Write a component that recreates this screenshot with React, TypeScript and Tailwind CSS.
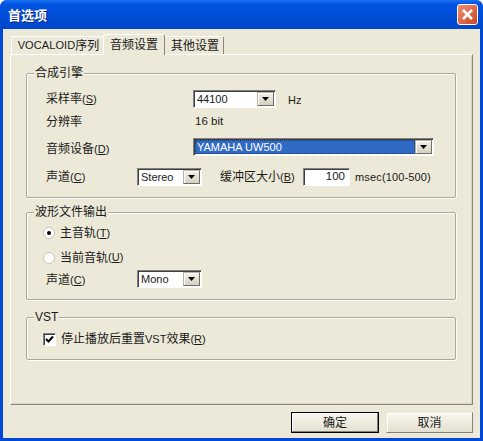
const font = "[font-family:'Liberation_Sans','Noto_Sans_CJK_SC',sans-serif]";

function U({ c }: { c: string }) {
  return <span className="text-[11px]">(<span className="underline">{c}</span>)</span>;
}

function Arrow() {
  return (
    <span className="flex h-full w-[17px] shrink-0 items-center justify-center border border-[#b8b4a4] border-r-[#716f64] border-b-[#716f64] bg-gradient-to-b from-[#f4f2e8] to-[#d4d0c0] shadow-[inset_1px_1px_0_#fff]">
      <svg width="7" height="4" viewBox="0 0 7 4"><path d="M0 0h7L3.5 4z" fill="#000" /></svg>
    </span>
  );
}

function Combo({ value, className, selected }: { value: string; className: string; selected?: boolean }) {
  return (
    <div className={`flex h-[18px] items-center border border-[#808080] border-r-white border-b-white bg-white p-px text-[11px] shadow-[inset_1px_1px_0_#404040] ${className}`}>
      <span className={`flex h-full min-w-0 flex-1 items-center pl-[2px] ${selected ? "bg-[#316ac5] text-white outline-1 -outline-offset-1 outline-dotted outline-[#1a3a70]" : ""}`}>{value}</span>
      <Arrow />
    </div>
  );
}

function Group({ title, className, children }: { title: string; className: string; children: React.ReactNode }) {
  return (
    <div className={`relative w-[430px] rounded-[2px] border border-[#aca899] shadow-[1px_1px_0_#fff,inset_1px_1px_0_#fff] ${className}`}>
      <span className="absolute -top-[9px] left-[7px] bg-[#ece9d8] px-[1px] leading-[16px]">{title}</span>
      {children}
    </div>
  );
}

function Row({ className, children }: { className?: string; children: React.ReactNode }) {
  return <div className={`flex h-[18px] items-center ${className ?? ""}`}>{children}</div>;
}

function Tab({ children, active, className }: { children: React.ReactNode; active?: boolean; className: string }) {
  return (
    <div className={`flex items-center justify-center rounded-t-[2px] border border-b-0 border-l-white border-t-white ${active ? "z-10 -mb-px h-[21px] border-r-[#8a8778] bg-[#ece9d8]" : "h-[18px] border-r-[#8a8778] bg-[#ece9d8]"} ${className}`}>
      {children}
    </div>
  );
}

export default function App() {
  return (
    <div className={`flex h-[441px] w-[483px] flex-col overflow-hidden rounded-t-[7px] bg-[#0049d8] text-[12px] leading-none text-[#1a1a1a] ${font}`}>
      <div className="flex h-[29px] shrink-0 items-center justify-between bg-gradient-to-b from-[#1a72f0] from-[0%] via-[#0052e0] via-[15%] to-[#0047cc] pl-[8px] pr-[5px]">
        <span className="pt-[2px] text-[13px] font-bold text-white [text-shadow:1px_1px_0_#0a2a80]">首选项</span>
        <span className="flex h-[21px] w-[21px] items-center justify-center rounded-[3px] border border-white bg-gradient-to-br from-[#ee9070] to-[#c8431c]">
          <svg width="13" height="13" viewBox="0 0 13 13"><path d="M2 2l9 9M11 2l-9 9" stroke="#fff" strokeWidth="2.6" fill="none" /></svg>
        </span>
      </div>
      <div className="mx-[3px] mb-[3px] flex flex-1 flex-col bg-[#ece9d8] px-[7px] pt-[5px]">
        <div className="flex h-[20px] items-end pl-[1px]">
          <Tab className="w-[93px] -mr-px pl-[2px]"><span className="text-[11px] tracking-[0.1px]">VOCALOID</span>序列</Tab>
          <Tab active className="w-[62px]">音频设置</Tab>
          <Tab className="w-[60px] -ml-px pl-[2px]">其他设置</Tab>
        </div>
        <div className="flex h-[351px] w-[463px] flex-col border border-l-white border-r-[#8a8778] border-b-[#8a8778] border-t-white pl-[15px] pt-[18px] shadow-[inset_-1px_-1px_0_#d8d4c4]">
          <Group title="合成引擎" className="h-[125px] pt-[16px]">
            <Row className="pl-[19px]">
              <span className="w-[147px]">采样率<U c="S" /></span>
              <Combo value="44100" className="w-[83px]" />
              <span className="ml-[12px] pt-[2px] text-[11px]">Hz</span>
            </Row>
            <Row className="mt-[4px] pl-[19px] pt-[2px]">
              <span className="w-[149px]">分辨率</span>
              <span className="text-[11.5px]">16 bit</span>
            </Row>
            <Row className="mt-[8px] pl-[19px]">
              <span className="w-[147px] pt-[3px]">音频设备<U c="D" /></span>
              <Combo value="YAMAHA UW500" selected className="h-[17px] w-[241px]" />
            </Row>
            <Row className="mt-[12px] pl-[19px]">
              <span className="w-[91px]">声道<U c="C" /></span>
              <Combo value="Stereo" className="w-[65px]" />
              <span className="ml-[18px] w-[83px]">缓冲区大小<U c="B" /></span>
              <span className="flex h-[18px] w-[47px] items-center justify-end border border-[#808080] border-r-white border-b-white bg-white pr-[4px] text-[11.5px] shadow-[inset_1px_1px_0_#404040]">100</span>
              <span className="ml-[5px] text-[11px] tracking-[0.15px]">msec(100-500)</span>
            </Row>
          </Group>
          <Group title="波形文件输出" className="mt-[14px] h-[88px] pt-[10px]">
            <Row className="pl-[16px] pt-[2px]">
              <span className="mr-[5px] flex h-[12px] w-[12px] items-center justify-center rounded-full border border-[#c8c6b8] bg-white"><span className="h-[4px] w-[4px] rounded-full bg-black" /></span>
              主音轨<U c="T" />
            </Row>
            <Row className="mt-[7px] pl-[16px] pt-[1px]">
              <span className="mr-[5px] h-[12px] w-[12px] rounded-full border border-[#c8c6b8] bg-white" />
              当前音轨<U c="U" />
            </Row>
            <Row className="mt-[4px] pl-[19px]">
              <span className="w-[91px] pt-[1px]">声道<U c="C" /></span>
              <Combo value="Mono" className="w-[65px]" />
            </Row>
          </Group>
          <Group title="VST" className="mt-[17px] h-[43px] pt-[12px]">
            <Row className="pl-[16px]">
              <span className="mr-[5px] flex h-[13px] w-[13px] items-center justify-center border border-[#808080] border-r-white border-b-white bg-white shadow-[inset_1px_1px_0_#404040]">
                <svg width="9" height="9" viewBox="0 0 9 9"><path d="M1 4l2.5 2.5L8 1.5" stroke="#000" strokeWidth="2" fill="none" /></svg>
              </span>
              <span>停止播放后重置<span className="text-[11px]">VST</span>效果<U c="R" /></span>
            </Row>
          </Group>
        </div>
        <div className="mt-[7px] flex justify-end gap-[7px]">
          <button className="h-[21px] w-[88px] border border-black bg-gradient-to-b from-[#f8f6ee] to-[#e4e0d0] shadow-[inset_-1px_-1px_0_#808080,inset_1px_1px_0_#fff]">确定</button>
          <button className="h-[21px] w-[87px] border border-[#ece9d8] border-r-[#808080] border-b-[#808080] bg-gradient-to-b from-[#f8f6ee] to-[#e4e0d0] shadow-[inset_1px_1px_0_#fff]">取消</button>
        </div>
      </div>
    </div>
  );
}
